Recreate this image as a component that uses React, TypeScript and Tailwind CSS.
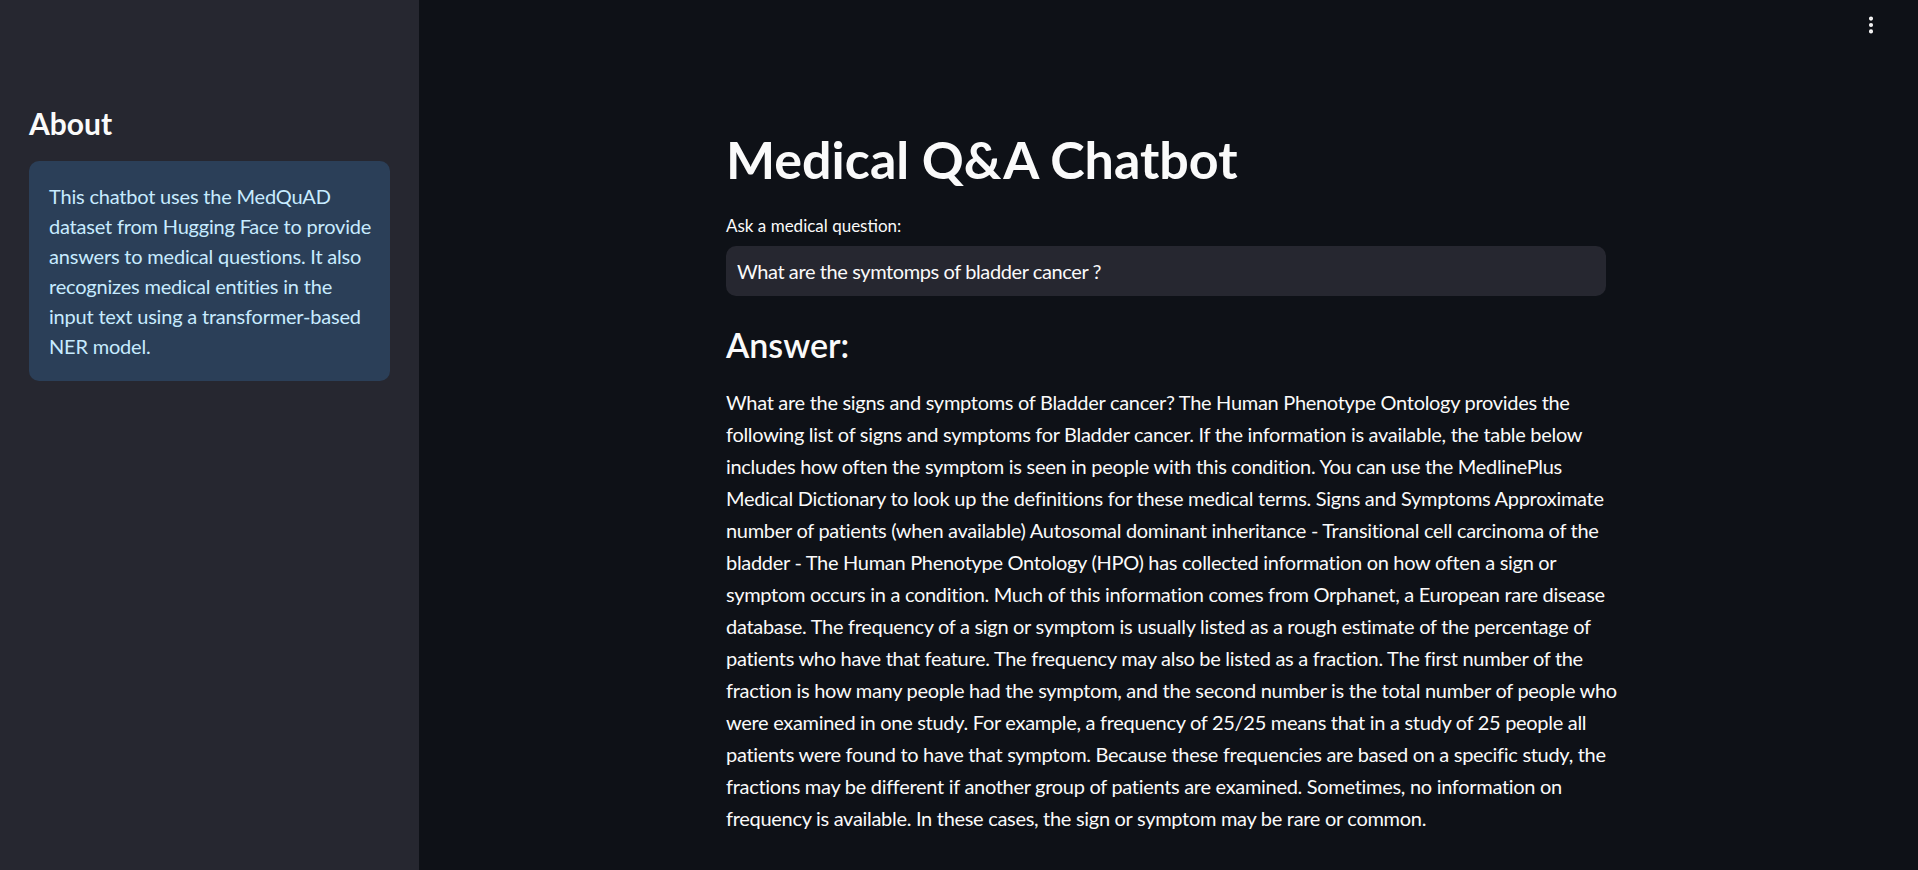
import { EllipsisVertical } from "lucide-react";

const aboutLines = [
  "This chatbot uses the MedQuAD",
  "dataset from Hugging Face to provide",
  "answers to medical questions. It also",
  "recognizes medical entities in the",
  "input text using a transformer-based",
  "NER model.",
];

// line breaks follow the reference rendering
const answerLines = [
  "What are the signs and symptoms of Bladder cancer? The Human Phenotype Ontology provides the",
  "following list of signs and symptoms for Bladder cancer. If the information is available, the table below",
  "includes how often the symptom is seen in people with this condition. You can use the MedlinePlus",
  "Medical Dictionary to look up the definitions for these medical terms. Signs and Symptoms Approximate",
  "number of patients (when available) Autosomal dominant inheritance - Transitional cell carcinoma of the",
  "bladder - The Human Phenotype Ontology (HPO) has collected information on how often a sign or",
  "symptom occurs in a condition. Much of this information comes from Orphanet, a European rare disease",
  "database. The frequency of a sign or symptom is usually listed as a rough estimate of the percentage of",
  "patients who have that feature. The frequency may also be listed as a fraction. The first number of the",
  "fraction is how many people had the symptom, and the second number is the total number of people who",
  "were examined in one study. For example, a frequency of 25/25 means that in a study of 25 people all",
  "patients were found to have that symptom. Because these frequencies are based on a specific study, the",
  "fractions may be different if another group of patients are examined. Sometimes, no information on",
  "frequency is available. In these cases, the sign or symptom may be rare or common.",
];

function Sidebar() {
  return (
    <aside className="w-[419px] shrink-0 bg-[#262730] px-[29px] pt-[105px]">
      <h2 className="text-[30px] font-bold leading-[36px] text-[#fafafa]">About</h2>
      <div className="mt-[20px] rounded-[10px] bg-[#2b3f58] p-[20px] text-[20px] leading-[30px] tracking-[-0.2px] text-[#c7ebff]">
        {aboutLines.map((line) => (
          <span key={line} className="block whitespace-nowrap">
            {line}
          </span>
        ))}
      </div>
    </aside>
  );
}

export default function App() {
  return (
    <div
      className="relative flex min-h-[870px] bg-[#0e1117] text-[#fafafa]"
      style={{ fontFamily: "Lato, 'Noto Sans', sans-serif" }}
    >
      <Sidebar />
      <main className="flex flex-1 justify-center pr-[5px] pt-[126px]">
        <div className="w-[880px]">
          <h1 className="text-[52px] font-bold leading-[66px]">Medical Q&amp;A Chatbot</h1>
          <label className="mt-[23px] block text-[17px] leading-[22px]">
            Ask a medical question:
          </label>
          <div className="mt-[9px] flex h-[50px] items-center rounded-[10px] bg-[#262730] px-[11px] text-[20px] tracking-[-0.4px]">
            What are the symtomps of bladder cancer ?
          </div>
          <h3 className="mt-[28px] text-[34px] font-semibold leading-[41px]">Answer:</h3>
          <p className="mt-[21px] text-[20px] leading-[32px] tracking-[-0.3px]">
            {answerLines.map((line) => (
              <span key={line} className="block whitespace-nowrap">
                {line}
              </span>
            ))}
          </p>
        </div>
      </main>
      <button className="absolute right-[36px] top-[14px] text-[#fafafa]">
        <EllipsisVertical size={22} strokeWidth={2.5} />
      </button>
    </div>
  );
}
